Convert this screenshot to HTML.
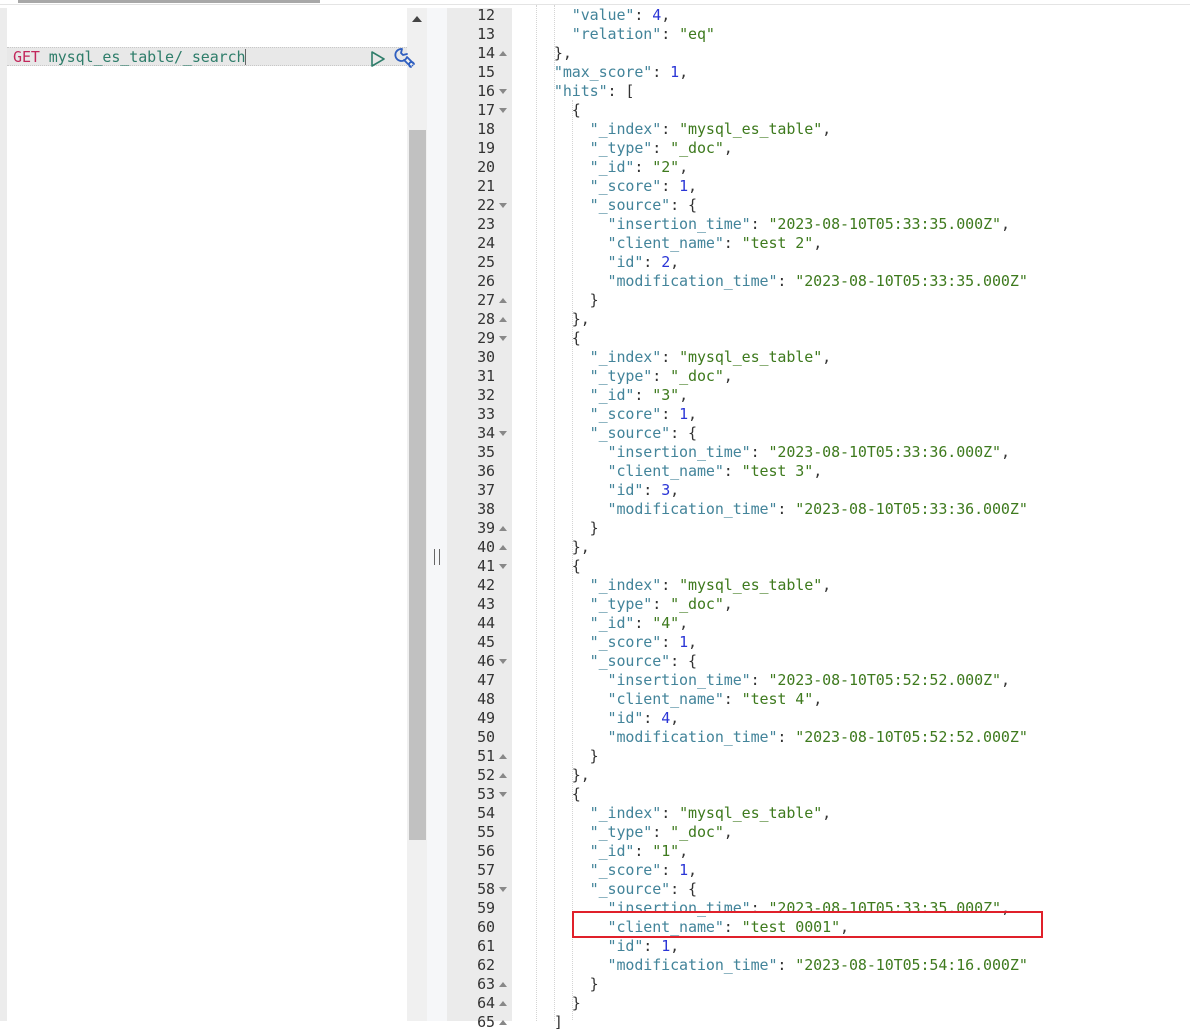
<!DOCTYPE html>
<html><head><meta charset="utf-8">
<style>
*{margin:0;padding:0;box-sizing:border-box}
body{width:1190px;height:1021px;overflow:hidden;background:#fff;position:relative;font-family:"DejaVu Sans Mono","Liberation Mono",monospace;font-size:15px}
.topline{position:absolute;left:0;top:4px;width:1190px;height:1px;background:#e4e4e4}
.topbar{position:absolute;left:18px;top:0;width:302px;height:3px;background:#a8a8a8}
.lstrip{position:absolute;left:0;top:8px;width:7px;height:1013px;background:#ececec}
.req{position:absolute;left:7px;top:47px;width:400px;height:19px;background:#e8e8e8;border-top:1px dotted #c8c8c8;border-bottom:1px dotted #c8c8c8;line-height:18px;padding-left:6px;white-space:pre;letter-spacing:-0.09px}
.req .m{color:#c2285c}.req .u{color:#2e7d6a}
.cursor{display:inline-block;width:1px;height:16px;background:#666;vertical-align:-3px}
.sb{position:absolute;left:407px;top:8px;width:20px;height:1013px;background:#f0f0f0}
.thumb{position:absolute;left:409px;top:130px;width:17px;height:710px;background:#c1c1c1}
.uparr{position:absolute;left:412px;top:16px;width:0;height:0;border-left:5px solid transparent;border-right:5px solid transparent;border-bottom:6px solid #444}
.div{position:absolute;left:427px;top:8px;width:20px;height:1013px;background:#f6f7f9}
.divh{position:absolute;left:434px;top:549px;width:6px;height:16px;border-left:1px solid #666;border-right:1px solid #666}
.gut{position:absolute;left:447px;top:8px;width:65px;height:1013px;background:#ebebeb}
.code{position:absolute;left:0;top:6px;width:1190px;letter-spacing:-0.09px}
.ln{height:19px;line-height:19px;position:relative;white-space:pre}
.num{position:absolute;left:447px;width:48px;text-align:right;color:#333}
.f{position:absolute;left:499px;top:7px;width:0;height:0;border-left:4px solid transparent;border-right:4px solid transparent}
.fu{border-bottom:5px solid #888}.fd{border-top:5px solid #888}
.t{position:absolute;left:536px;color:#333}
.k{color:#43849a}.s{color:#3e7a1e}.n{color:#2a35d6}
.g{position:absolute;top:5px;width:0;height:1016px;border-left:1px dotted #d4d4d4}
.box{position:absolute;left:572px;top:911px;width:471px;height:27px;border:2px solid #e0202a}
.ic{position:absolute;z-index:5}
</style></head><body>
<div class="topline"></div><div class="topbar"></div>
<div class="lstrip"></div>
<div class="req"><span class="m">GET</span> <span class="u">mysql_es_table/_search</span><span class="cursor"></span></div>
<div class="sb"></div><div class="thumb"></div><div class="uparr"></div>
<svg class="ic" style="left:369px;top:49px" width="18" height="20" viewBox="0 0 18 20"><path d="M3 3 L15 10 L3 17 Z" fill="none" stroke="#2e7d6a" stroke-width="1.6" stroke-linejoin="round"/></svg>
<svg class="ic" style="left:393px;top:46px" width="26" height="26" viewBox="0 0 26 26"><path d="M9 3 A6 6 0 1 0 14 11 L21 18 A2.5 2.5 0 1 0 18 21 L11 14 M9 3 L8 7 L10 9 L14 8" fill="none" stroke="#2f5fc0" stroke-width="1.8" stroke-linejoin="round" stroke-linecap="round"/><circle cx="19.5" cy="19.5" r="0.9" fill="#2f5fc0"/></svg>
<div class="div"></div><div class="divh"></div>
<div class="gut"></div>
<div class="g" style="left:536px"></div>
<div class="g" style="left:554px"></div>
<div class="g" style="left:572px;top:100px;height:920px"></div>
<div class="code">
<div class="ln"><span class="num">12</span><span class="t">    <span class="k">"value"</span>: <span class="n">4</span>,</span></div>
<div class="ln"><span class="num">13</span><span class="t">    <span class="k">"relation"</span>: <span class="s">"eq"</span></span></div>
<div class="ln"><span class="num">14</span><i class="f fu"></i><span class="t">  },</span></div>
<div class="ln"><span class="num">15</span><span class="t">  <span class="k">"max_score"</span>: <span class="n">1</span>,</span></div>
<div class="ln"><span class="num">16</span><i class="f fd"></i><span class="t">  <span class="k">"hits"</span>: [</span></div>
<div class="ln"><span class="num">17</span><i class="f fd"></i><span class="t">    {</span></div>
<div class="ln"><span class="num">18</span><span class="t">      <span class="k">"_index"</span>: <span class="s">"mysql_es_table"</span>,</span></div>
<div class="ln"><span class="num">19</span><span class="t">      <span class="k">"_type"</span>: <span class="s">"_doc"</span>,</span></div>
<div class="ln"><span class="num">20</span><span class="t">      <span class="k">"_id"</span>: <span class="s">"2"</span>,</span></div>
<div class="ln"><span class="num">21</span><span class="t">      <span class="k">"_score"</span>: <span class="n">1</span>,</span></div>
<div class="ln"><span class="num">22</span><i class="f fd"></i><span class="t">      <span class="k">"_source"</span>: {</span></div>
<div class="ln"><span class="num">23</span><span class="t">        <span class="k">"insertion_time"</span>: <span class="s">"2023-08-10T05:33:35.000Z"</span>,</span></div>
<div class="ln"><span class="num">24</span><span class="t">        <span class="k">"client_name"</span>: <span class="s">"test 2"</span>,</span></div>
<div class="ln"><span class="num">25</span><span class="t">        <span class="k">"id"</span>: <span class="n">2</span>,</span></div>
<div class="ln"><span class="num">26</span><span class="t">        <span class="k">"modification_time"</span>: <span class="s">"2023-08-10T05:33:35.000Z"</span></span></div>
<div class="ln"><span class="num">27</span><i class="f fu"></i><span class="t">      }</span></div>
<div class="ln"><span class="num">28</span><i class="f fu"></i><span class="t">    },</span></div>
<div class="ln"><span class="num">29</span><i class="f fd"></i><span class="t">    {</span></div>
<div class="ln"><span class="num">30</span><span class="t">      <span class="k">"_index"</span>: <span class="s">"mysql_es_table"</span>,</span></div>
<div class="ln"><span class="num">31</span><span class="t">      <span class="k">"_type"</span>: <span class="s">"_doc"</span>,</span></div>
<div class="ln"><span class="num">32</span><span class="t">      <span class="k">"_id"</span>: <span class="s">"3"</span>,</span></div>
<div class="ln"><span class="num">33</span><span class="t">      <span class="k">"_score"</span>: <span class="n">1</span>,</span></div>
<div class="ln"><span class="num">34</span><i class="f fd"></i><span class="t">      <span class="k">"_source"</span>: {</span></div>
<div class="ln"><span class="num">35</span><span class="t">        <span class="k">"insertion_time"</span>: <span class="s">"2023-08-10T05:33:36.000Z"</span>,</span></div>
<div class="ln"><span class="num">36</span><span class="t">        <span class="k">"client_name"</span>: <span class="s">"test 3"</span>,</span></div>
<div class="ln"><span class="num">37</span><span class="t">        <span class="k">"id"</span>: <span class="n">3</span>,</span></div>
<div class="ln"><span class="num">38</span><span class="t">        <span class="k">"modification_time"</span>: <span class="s">"2023-08-10T05:33:36.000Z"</span></span></div>
<div class="ln"><span class="num">39</span><i class="f fu"></i><span class="t">      }</span></div>
<div class="ln"><span class="num">40</span><i class="f fu"></i><span class="t">    },</span></div>
<div class="ln"><span class="num">41</span><i class="f fd"></i><span class="t">    {</span></div>
<div class="ln"><span class="num">42</span><span class="t">      <span class="k">"_index"</span>: <span class="s">"mysql_es_table"</span>,</span></div>
<div class="ln"><span class="num">43</span><span class="t">      <span class="k">"_type"</span>: <span class="s">"_doc"</span>,</span></div>
<div class="ln"><span class="num">44</span><span class="t">      <span class="k">"_id"</span>: <span class="s">"4"</span>,</span></div>
<div class="ln"><span class="num">45</span><span class="t">      <span class="k">"_score"</span>: <span class="n">1</span>,</span></div>
<div class="ln"><span class="num">46</span><i class="f fd"></i><span class="t">      <span class="k">"_source"</span>: {</span></div>
<div class="ln"><span class="num">47</span><span class="t">        <span class="k">"insertion_time"</span>: <span class="s">"2023-08-10T05:52:52.000Z"</span>,</span></div>
<div class="ln"><span class="num">48</span><span class="t">        <span class="k">"client_name"</span>: <span class="s">"test 4"</span>,</span></div>
<div class="ln"><span class="num">49</span><span class="t">        <span class="k">"id"</span>: <span class="n">4</span>,</span></div>
<div class="ln"><span class="num">50</span><span class="t">        <span class="k">"modification_time"</span>: <span class="s">"2023-08-10T05:52:52.000Z"</span></span></div>
<div class="ln"><span class="num">51</span><i class="f fu"></i><span class="t">      }</span></div>
<div class="ln"><span class="num">52</span><i class="f fu"></i><span class="t">    },</span></div>
<div class="ln"><span class="num">53</span><i class="f fd"></i><span class="t">    {</span></div>
<div class="ln"><span class="num">54</span><span class="t">      <span class="k">"_index"</span>: <span class="s">"mysql_es_table"</span>,</span></div>
<div class="ln"><span class="num">55</span><span class="t">      <span class="k">"_type"</span>: <span class="s">"_doc"</span>,</span></div>
<div class="ln"><span class="num">56</span><span class="t">      <span class="k">"_id"</span>: <span class="s">"1"</span>,</span></div>
<div class="ln"><span class="num">57</span><span class="t">      <span class="k">"_score"</span>: <span class="n">1</span>,</span></div>
<div class="ln"><span class="num">58</span><i class="f fd"></i><span class="t">      <span class="k">"_source"</span>: {</span></div>
<div class="ln"><span class="num">59</span><span class="t">        <span class="k">"insertion_time"</span>: <span class="s">"2023-08-10T05:33:35.000Z"</span>,</span></div>
<div class="ln"><span class="num">60</span><span class="t">        <span class="k">"client_name"</span>: <span class="s">"test 0001"</span>,</span></div>
<div class="ln"><span class="num">61</span><span class="t">        <span class="k">"id"</span>: <span class="n">1</span>,</span></div>
<div class="ln"><span class="num">62</span><span class="t">        <span class="k">"modification_time"</span>: <span class="s">"2023-08-10T05:54:16.000Z"</span></span></div>
<div class="ln"><span class="num">63</span><i class="f fu"></i><span class="t">      }</span></div>
<div class="ln"><span class="num">64</span><i class="f fu"></i><span class="t">    }</span></div>
<div class="ln"><span class="num">65</span><i class="f fu"></i><span class="t">  ]</span></div>
</div>
<div class="box"></div>
</body></html>
